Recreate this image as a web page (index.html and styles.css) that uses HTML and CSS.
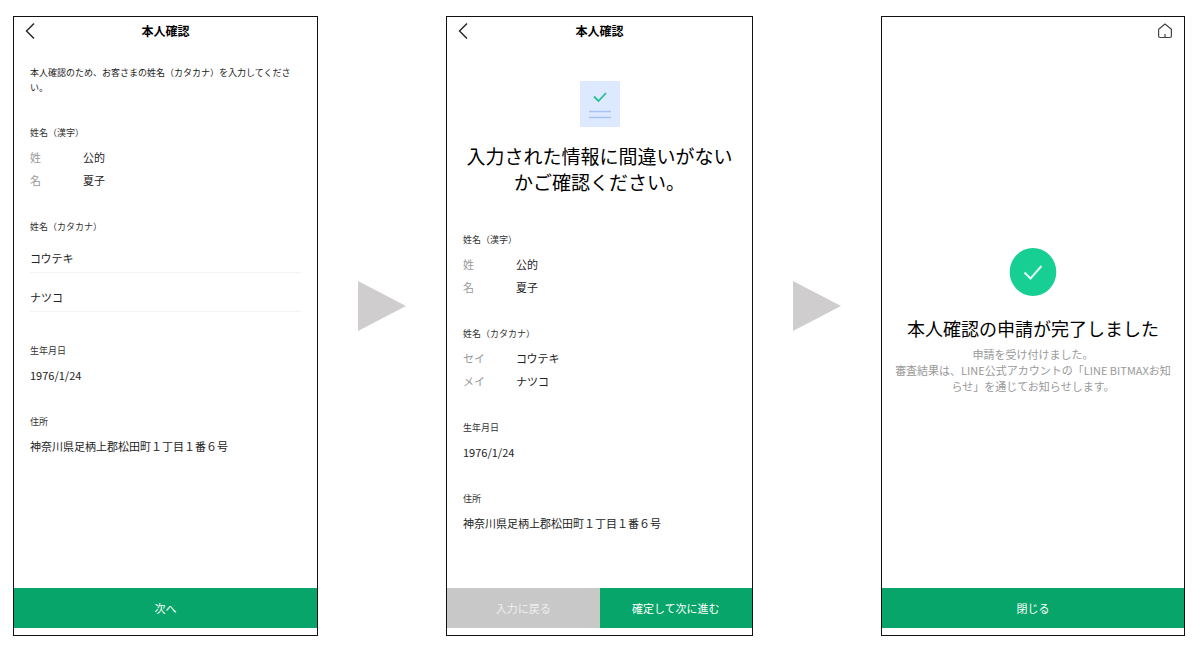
FILE: index.html
```html
<!DOCTYPE html>
<html lang="ja">
<head>
<meta charset="utf-8">
<title>本人確認</title>
<link rel="stylesheet" href="styles.css">
</head>
<body>
<main class="flow">
  <form class="screen">
    <header class="bar">
      <button class="icon-button" type="button" aria-label="戻る">
        <svg width="10" height="16" viewBox="0 0 10 16"><path d="M9 .5 1.500 8 9 15.500" fill="none" stroke="currentColor" stroke-width="1.400"/></svg>
      </button>
      <h1 class="title">本人確認</h1>
    </header>
    <div class="content">
      <p class="lead">本人確認のため、お客さまの姓名（カタカナ）を入力してください。</p>
      <section class="group">
        <h2 class="label">姓名（漢字）</h2>
        <dl class="rows">
          <dt>姓</dt><dd>公的</dd>
          <dt>名</dt><dd>夏子</dd>
        </dl>
      </section>
      <section class="group group-inputs">
        <h2 class="label">姓名（カタカナ）</h2>
        <input class="field" type="text" aria-label="セイ" value="コウテキ">
        <input class="field" type="text" aria-label="メイ" value="ナツコ">
      </section>
      <section class="group">
        <h2 class="label">生年月日</h2>
        <p class="value">1976/1/24</p>
      </section>
      <section class="group">
        <h2 class="label">住所</h2>
        <p class="value">神奈川県足柄上郡松田町１丁目１番６号</p>
      </section>
    </div>
    <footer class="actions">
      <button class="action" type="button">次へ</button>
    </footer>
  </form>

  <div class="arrow"><svg width="48" height="50" viewBox="0 0 48 50"><path d="M0 0 48 25 0 50Z" fill="#cfcdce"/></svg></div>

  <section class="screen">
    <header class="bar">
      <button class="icon-button" type="button" aria-label="戻る">
        <svg width="10" height="16" viewBox="0 0 10 16"><path d="M9 .5 1.500 8 9 15.500" fill="none" stroke="currentColor" stroke-width="1.400"/></svg>
      </button>
      <h1 class="title">本人確認</h1>
    </header>
    <div class="content">
      <div class="confirm">
        <svg width="40" height="46" viewBox="0 0 40 46">
          <path d="M0 0h40v46H0z" fill="#dde9fe"/>
          <path d="m14 15.500 4.500 4.500 7.500-8" fill="none" stroke="#27bd95" stroke-width="1.800"/>
          <path d="M9 30.500h22M9 36.500h22" stroke="#a9c3f5" stroke-width="1.400"/>
        </svg>
        <h2 class="headline">入力された情報に間違いがないかご確認ください。</h2>
      </div>
      <section class="group">
        <h3 class="label">姓名（漢字）</h3>
        <dl class="rows">
          <dt>姓</dt><dd>公的</dd>
          <dt>名</dt><dd>夏子</dd>
        </dl>
      </section>
      <section class="group">
        <h3 class="label">姓名（カタカナ）</h3>
        <dl class="rows">
          <dt>セイ</dt><dd>コウテキ</dd>
          <dt>メイ</dt><dd>ナツコ</dd>
        </dl>
      </section>
      <section class="group">
        <h3 class="label">生年月日</h3>
        <p class="value">1976/1/24</p>
      </section>
      <section class="group">
        <h3 class="label">住所</h3>
        <p class="value">神奈川県足柄上郡松田町１丁目１番６号</p>
      </section>
    </div>
    <footer class="actions">
      <button class="action action-muted" type="button">入力に戻る</button>
      <button class="action" type="button">確定して次に進む</button>
    </footer>
  </section>

  <div class="arrow"><svg width="48" height="50" viewBox="0 0 48 50"><path d="M0 0 48 25 0 50Z" fill="#cfcdce"/></svg></div>

  <section class="screen">
    <header class="bar bar-end">
      <button class="icon-button" type="button" aria-label="ホーム">
        <svg width="16" height="16" viewBox="0 0 16 16" fill="none" stroke="#444" stroke-width="1.200"><path d="M8 1 1.600 6.300V13q0 1.500 1.500 1.500h9.800q1.500 0 1.500-1.500V6.300Z" stroke-linejoin="round"/><path d="M8 11v3.500"/></svg>
      </button>
    </header>
    <div class="done">
      <svg width="48" height="48" viewBox="0 0 48 48">
        <ellipse cx="24" cy="24" rx="23.300" ry="24" fill="#18cf93"/>
        <path d="m15.500 24.500 6 6 11-12.500" fill="none" stroke="#e4fff5" stroke-width="1.900"/>
      </svg>
      <h2 class="headline headline-done">本人確認の申請が完了しました</h2>
      <p class="note">申請を受け付けました。<br>審査結果は、LINE公式アカウントの「LINE BITMAXお知らせ」を通じてお知らせします。</p>
    </div>
    <footer class="actions">
      <button class="action" type="button">閉じる</button>
    </footer>
  </section>
</main>
</body>
</html>
```
FILE: styles.css
```css
* {
  box-sizing: border-box;
}

body,
h1,
h2,
h3,
p,
dl,
dd {
  margin: 0;
}

body {
  background: #fff;
  color: #222;
  font-family: "Noto Sans CJK JP", sans-serif;
  font-size: 11px;
}

button,
input {
  border: 0;
  border-radius: 0;
  padding: 0;
  background: none;
  color: inherit;
  font: inherit;
}

svg {
  display: block;
}

.flow {
  display: grid;
  grid-template-columns: 305fr 128px 307fr 128px 304fr;
  min-height: 100vh;
  padding: 16px 15px 13px 13px;
}

.screen {
  display: flex;
  flex-direction: column;
  border: 1px solid #111;
  padding-bottom: 7px;
}

.arrow {
  display: flex;
  align-items: center;
  justify-content: center;
  padding-bottom: 40px;
}

.bar {
  display: grid;
  grid-template-columns: 16px 1fr 16px;
  align-items: center;
  height: 28px;
  padding: 0 11px;
}

.bar-end {
  grid-template-columns: 16px;
  justify-content: end;
}

.icon-button {
  height: 16px;
}

.title {
  color: #000;
  font-size: 12px;
  font-weight: 700;
  line-height: 20px;
  text-align: center;
}

.content {
  flex: 1;
  padding: 20px 16px;
}

.lead {
  margin-bottom: 30px;
  font-size: 9px;
  line-height: 15px;
}

.group {
  margin-bottom: 27px;
}

.group-inputs {
  margin-bottom: 31px;
}

.label {
  color: #333;
  font-size: 9px;
  font-weight: 400;
  line-height: 15px;
}

.rows {
  display: grid;
  grid-template-columns: 53px 1fr;
  margin-top: 6px;
  line-height: 23px;
}

.rows dt {
  color: #999;
}

.value {
  margin-top: 6px;
  line-height: 23px;
}

.field {
  display: block;
  width: 100%;
  height: 39px;
  border-bottom: 1px solid #f4f4f4;
  padding-top: 9px;
}

.confirm {
  display: flex;
  flex-direction: column;
  align-items: center;
  gap: 16px;
  padding: 16px 0 37px;
}

.headline {
  color: #000;
  font-size: 19px;
  font-weight: 400;
  line-height: 26px;
  text-align: center;
}

.headline-done {
  margin: 19px 0 5px;
  font-size: 18px;
}

.done {
  display: flex;
  flex: 1;
  flex-direction: column;
  align-items: center;
  justify-content: center;
  padding: 8px 12px 0;
}

.note {
  color: #999;
  line-height: 16px;
  text-align: center;
}

.actions {
  display: flex;
  height: 40px;
}

.action {
  flex: 1;
  background: #07a569;
  color: #fff;
}

.action-muted {
  background: #c8c8c8;
  color: #eee;
}
```
